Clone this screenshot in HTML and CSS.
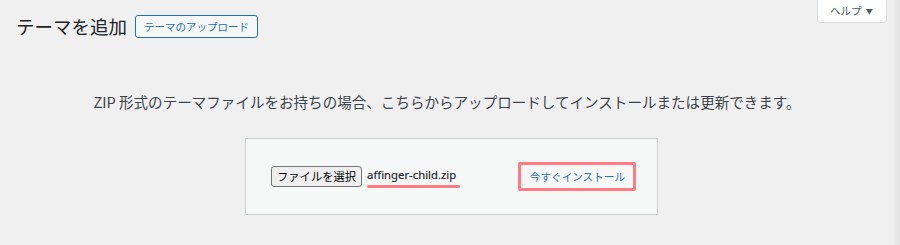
FILE: index.html
```html
<!DOCTYPE html>
<html lang="ja">
<head>
<meta charset="utf-8">
<title>テーマを追加</title>
<link rel="stylesheet" href="styles.css">
</head>
<body>
<div class="page">
  <main class="main">
    <div class="help-tab">ヘルプ <span class="caret">▼</span></div>
    <div class="header">
      <h1 class="title">テーマを追加</h1>
      <span class="upload-btn">テーマのアップロード</span>
    </div>
    <p class="help-text">ZIP 形式のテーマファイルをお持ちの場合、こちらからアップロードしてインストールまたは更新できます。</p>
    <div class="box-wrap">
      <div class="upload-box">
        <span class="file-btn">ファイルを選択</span>
        <span class="file-name"><span class="file-text">affinger-child.zip</span><span class="mark-line"></span></span>
        <span class="install-btn">今すぐインストール</span>
      </div>
    </div>
  </main>
  <div class="edge"></div>
</div>
</body>
</html>
```
FILE: styles.css
```css
html, body {
  margin: 0;
  padding: 0;
  background: #f0f0f1;
}
body {
  font-family: "Noto Sans CJK JP", "Noto Sans", sans-serif;
  color: #1d2327;
}
.page {
  display: flex;
  height: 245px;
}
.main {
  flex: 1;
  padding-left: 17px;
}
.edge {
  width: 6px;
  background: linear-gradient(to right, #ebebeb, #e3e3e3);
}
.help-tab {
  float: right;
  margin-right: 7px;
  width: 70px;
  height: 23px;
  box-sizing: border-box;
  background: #fff;
  border: 1px solid #dcdcde;
  border-top: none;
  border-radius: 0 0 4px 4px;
  font-size: 10.5px;
  line-height: 22px;
  color: #50575e;
  padding-left: 12px;
}
.caret {
  font-size: 7px;
  vertical-align: 1px;
  margin-left: 2px;
}
.header {
  display: flex;
  align-items: center;
  padding-top: 15px;
  height: 23px;
}
.title {
  margin: 0 0 0 -1px;
  font-size: 18.5px;
  font-weight: 400;
  line-height: 23px;
  color: #1d2327;
}
.upload-btn {
  margin-left: 8px;
  height: 23px;
  box-sizing: border-box;
  border: 1px solid #2271b1;
  border-radius: 3px;
  background: #f6f7f7;
  color: #2271b1;
  font-size: 10.5px;
  line-height: 21px;
  padding: 0 8px;
}
.help-text {
  margin: 54px 0 0 -17px;
  text-align: center;
  font-size: 14.55px;
  line-height: 20px;
  color: #3c434a;
}
.box-wrap {
  display: flex;
  justify-content: center;
  margin-top: 26px;
  padding-left: 9px;
  margin-left: -17px;
}
.upload-box {
  display: flex;
  align-items: center;
  width: 413px;
  height: 77px;
  box-sizing: border-box;
  border: 1px solid #cfd0d2;
  background: #f6f7f7;
  padding: 0 21px 0 25px;
}
.file-btn {
  height: 21px;
  box-sizing: border-box;
  border: 1px solid #767676;
  border-radius: 3px;
  background: #efefef;
  font-size: 11.3px;
  line-height: 19px;
  padding: 0 5px;
  color: #000;
}
.file-name {
  display: inline-flex;
  flex-direction: column;
  margin-left: 5px;
  position: relative;
  top: 1px;
}
.file-text {
  font-family: "Noto Sans", sans-serif;
  font-size: 11.3px;
  font-weight: 400;
  line-height: 16px;
  color: #1d2327;
  -webkit-text-stroke: 0.15px #1d2327;
}
.mark-line {
  height: 3px;
  border-radius: 2px;
  background: #ff7b82;
  margin-top: 2px;
  width: 93px;
}
.install-btn {
  margin-left: auto;
  height: 29px;
  box-sizing: border-box;
  border: 3px solid #ff7b82;
  border-radius: 2px;
  background: #f6f7f7;
  color: #2271b1;
  font-size: 10.6px;
  line-height: 23px;
  padding: 0 8px 0 9px;
}
```
